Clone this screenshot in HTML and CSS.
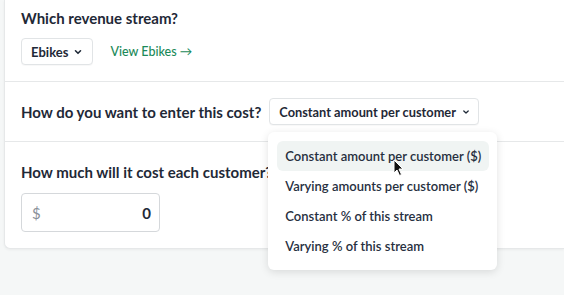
FILE: index.html
```html
<!doctype html>
<html>
<head>
    <title>Cost settings</title>
    <link rel="stylesheet" href="styles.css">
</head>
<body>
    <div class="cost-card">
        <div class="section">
            <h2 class="question">Which revenue stream?</h2>
            <div class="row">
                <button class="select-btn">Ebikes
                    <svg class="chev" width="10" height="10" viewBox="0 0 10 10"><path d="M2.5 3.8 L5 6.3 L7.5 3.8" fill="none" stroke="#1f2937" stroke-width="1.6" stroke-linecap="round" stroke-linejoin="round"/></svg>
                </button>
                <a class="link" href="#">View Ebikes &rarr;</a>
            </div>
        </div>
        <div class="section inline">
            <h2 class="question">How do you want to enter this cost?</h2>
            <div class="dropdown">
                <button class="select-btn small">Constant amount per customer
                    <svg class="chev" width="10" height="10" viewBox="0 0 10 10"><path d="M2.8 4 L5 6 L7.2 4" fill="none" stroke="#1f2937" stroke-width="1.3" stroke-linecap="round" stroke-linejoin="round"/></svg>
                </button>
                <ul class="menu">
                    <li class="active">Constant amount per customer ($)</li>
                    <li>Varying amounts per customer ($)</li>
                    <li>Constant % of this stream</li>
                    <li>Varying % of this stream</li>
                </ul>
                <!-- mouse pointer -->
                <svg class="cursor" width="12" height="18" viewBox="0 0 12 18"><path d="M1 1 L1 14 L4 11 L6.5 16.5 L8.5 15.5 L6 10 L10 10 Z" fill="#111" stroke="#fff" stroke-width="1"/></svg>
            </div>
        </div>
        <div class="section">
            <h2 class="question">How much will it cost each customer?</h2>
            <div class="money-input">
                <span class="prefix">$</span>
                <span class="value">0</span>
            </div>
        </div>
    </div>
</body>
</html>
```
FILE: styles.css
```css
html, body {
    height: 100%;
}
body {
    margin: 0;
    background-color: #f5f7f7;
    font-family: "Lato", "Noto Sans", sans-serif;
    color: #1f2937;
}
.cost-card {
    margin-left: 4px;
    background-color: #fff;
    border: 1px solid #e6e8e9;
    border-top: none;
    border-right: none;
    border-radius: 0 0 0 6px;
    box-shadow: 0 1px 3px rgba(0, 0, 0, 0.05);
}
.section {
    padding: 7px 16px 16px;
    border-bottom: 1px solid #e6e8e9;
}
.section:last-child {
    border-bottom: none;
    padding-top: 19px;
}
.section.inline {
    display: flex;
    align-items: center;
    padding: 16px 16px 16px;
}
.question {
    margin: 0;
    font-size: 15px;
    font-weight: 700;
    line-height: 22px;
    white-space: nowrap;
}
.inline .question {
    margin-right: 8px;
}
.row {
    display: flex;
    align-items: center;
    margin-top: 9px;
}
.select-btn {
    display: flex;
    align-items: center;
    height: 27px;
    padding: 0 9px 0 9px;
    background: #fff;
    border: 1px solid #e1e4e6;
    border-radius: 4px;
    font-family: inherit;
    font-size: 13px;
    font-weight: 700;
    color: #1f2937;
    white-space: nowrap;
    box-shadow: 0 1px 1px rgba(0, 0, 0, 0.03);
}
.select-btn .chev {
    margin-left: 5px;
}
.select-btn.small {
    font-size: 12.8px;
    padding: 0 7px 0 9px;
}
.link {
    margin-left: 17px;
    color: #1c8a5a;
    font-size: 12.5px;
    font-weight: 500;
    text-decoration: none;
}
.dropdown {
    position: relative;
    z-index: 5;
}
.menu {
    position: absolute;
    left: -1px;
    top: 34px;
    width: 212px;
    margin: 0;
    padding: 9px 8px 9px 9px;
    list-style: none;
    background: #fff;
    border-radius: 6px;
    box-shadow: 0 2px 8px rgba(0, 0, 0, 0.12);
    z-index: 2;
}
.menu li {
    height: 30px;
    line-height: 30px;
    padding: 0 8px;
    border-radius: 6px;
    font-size: 13px;
    font-weight: 600;
    color: #27303f;
    white-space: nowrap;
}
.menu li.active {
    background-color: #f0f4f3;
}
.cursor {
    position: absolute;
    left: 124px;
    top: 61px;
    z-index: 3;
}
.money-input {
    display: flex;
    align-items: center;
    justify-content: space-between;
    box-sizing: border-box;
    width: 139px;
    height: 39px;
    margin-top: 10px;
    padding: 0 8px 0 10px;
    border: 1px solid #d5d8db;
    border-radius: 4px;
}
.prefix {
    color: #8a9099;
    font-size: 15px;
}
.value {
    font-size: 15px;
    font-weight: 700;
}
```
